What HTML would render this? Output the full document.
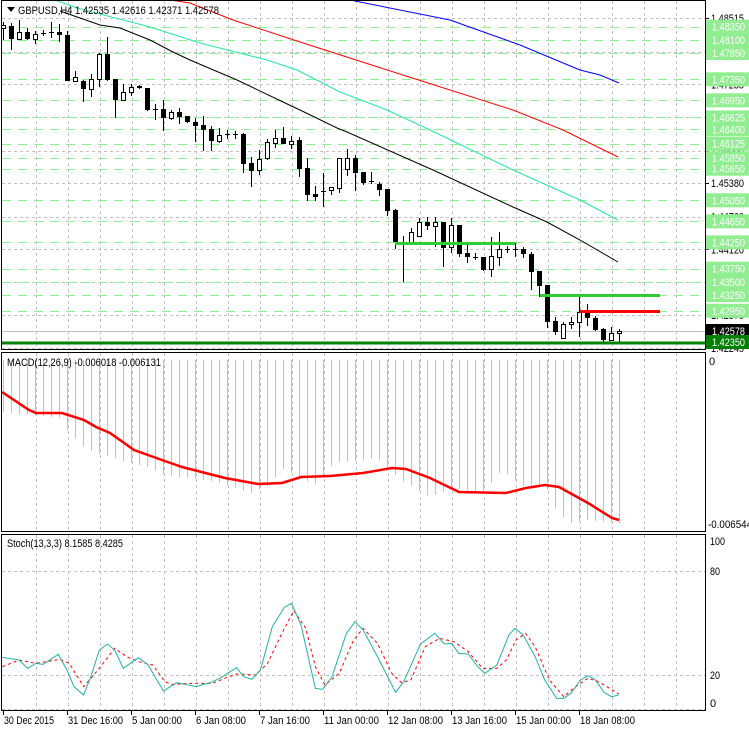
<!DOCTYPE html>
<html><head><meta charset="utf-8">
<style>
html,body{margin:0;padding:0;background:#fff;}
svg{display:block;font-family:"Liberation Sans",sans-serif;}
</style></head>
<body>
<svg id="s" width="749" height="731" viewBox="0 0 749 731" xmlns="http://www.w3.org/2000/svg">
<defs>
<clipPath id="cm"><rect x="2" y="1" width="703" height="348"/></clipPath>
<clipPath id="cs"><rect x="2" y="535" width="703" height="175"/></clipPath>
</defs>
<rect width="749" height="731" fill="#fff"/>
<g id="grid"></g>
<g id="main" clip-path="url(#cm)"></g>
<g id="macd"></g>
<g id="stoch" clip-path="url(#cs)"></g>
<g id="axis" font-size="11"></g>
<g stroke="#000" fill="none" stroke-width="1">
<rect x="1.5" y="0.5" width="704" height="349"/>
<rect x="1.5" y="352.5" width="704" height="179"/>
<rect x="1.5" y="534.5" width="704" height="176"/>
</g>
<g font-size="11" fill="#000">
<path d="M7 7 L15 7 L11 12 Z" fill="#000"/>
<text x="18" y="14" textLength="201" lengthAdjust="spacingAndGlyphs">GBPUSD,H4  1.42535 1.42616 1.42371 1.42578</text>
<text x="7" y="366" textLength="154" lengthAdjust="spacingAndGlyphs">MACD(12,26,9) -0.006018 -0.006131</text>
<text x="7" y="547" textLength="116" lengthAdjust="spacingAndGlyphs">Stoch(13,3,3) 8.1585 8.4285</text>
</g>
</svg>
<script>
var NS="http://www.w3.org/2000/svg";
function el(p,t,a){var e=document.createElementNS(NS,t);for(var k in a)e.setAttribute(k,a[k]);p.appendChild(e);return e;}
var G=document.getElementById('grid'),M=document.getElementById('main'),MC=document.getElementById('macd'),ST=document.getElementById('stoch'),AX=document.getElementById('axis');
function py(p){return 26.7+(1.4835-p)/0.0001901;}
function tx(x,y,s,fill,len){var a={x:x,y:y};if(fill)a.fill=fill;if(len){a.textLength=len;a.lengthAdjust='spacingAndGlyphs';}var t=el(AX,'text',a);t.textContent=s;return t;}
for(var k=1;k<=21;k++){var x=4+32*k+0.5;
 el(G,'line',{x1:x,y1:1,x2:x,y2:349,stroke:'#c0c0c0','stroke-dasharray':'3,3'});
 el(G,'line',{x1:x,y1:353,x2:x,y2:531,stroke:'#c0c0c0','stroke-dasharray':'3,3'});
 el(G,'line',{x1:x,y1:535,x2:x,y2:710,stroke:'#c0c0c0','stroke-dasharray':'3,3'});}
var hg=[[18,'1.48515'],[51.7,'1.47875'],[84.3,'1.47235'],[117,'1.46595'],[150.7,'1.46000'],[183,'1.45380'],[216.7,'1.44760'],[249.3,'1.44120'],[282,'1.43500'],[315,'1.42875'],[348,'1.42245']];
hg.forEach(function(h){var y=Math.round(h[0])+0.5;el(G,'line',{x1:2,y1:y,x2:705,y2:y,stroke:'#c0c0c0','stroke-dasharray':'3,3'});
 el(AX,'line',{x1:705,y1:y,x2:709,y2:y,stroke:'#000'});
 tx(711,h[0]+4,h[1],null,33);});
[571,675,709].forEach(function(y){el(G,'line',{x1:2,y1:y+0.5,x2:705,y2:y+0.5,stroke:'#c0c0c0','stroke-dasharray':'3,3'});});
var gl=['1.48350','1.48100','1.47850','1.47350','1.46950','1.46625','1.46400','1.46125','1.45850','1.45650','1.45050','1.44650','1.44250','1.43750','1.43500','1.43250','1.42950'];
gl.forEach(function(p){var y=Math.round(py(+p))+0.5;el(M,'line',{x1:2,y1:y,x2:705,y2:y,stroke:'#90ee90','stroke-dasharray':'9,7'});});
el(M,'line',{x1:2,y1:331.5,x2:705,y2:331.5,stroke:'#c0c0c0'});
function pl(p,pts,c,w,d){var a={points:pts.map(function(q){return q.join(',')}).join(' '),fill:'none',stroke:c,'stroke-width':w||1};if(d)a['stroke-dasharray']=d;el(p,'polyline',a);}
pl(M,[[350,0],[450,20],[520,45],[580,70],[600,75],[619,83]],'#0000ff');
pl(M,[[170,0],[190,3],[233,20],[300,42],[406,76],[513,110],[563,130],[618,157]],'#ff0000');
pl(M,[[55,0],[77,8],[150,27],[200,43],[267,60],[297,70],[340,92],[387,110],[430,130],[513,170],[580,200],[618,220]],'#20e8a8');
pl(M,[[60,11],[100,25],[120,28],[150,40],[173,52],[190,60],[237,80],[283,102],[300,110],[337,128],[347,132],[433,170],[513,207],[547,222],[580,240],[618,262]],'#000');
var C=[[1,25,28,22,40],[0,26,39,23,50],[1,32,39,20,39],[0,32,39,28,40],[1,34,39,31,44],[0,33,34,30,36],[0,32,33,22,38],[0,32,35,24,42],[0,35,81,31,81],[1,77,81,71,81],[0,81,89,80,102],[1,79,89,74,97],[1,54,79,53,87],[0,54,80,37,81],[0,79,100,79,118],[1,92,100,84,101],[1,87,92,84,96],[0,86,88,85,89],[0,88,110,88,111],[0,109,110,104,120],[0,109,118,100,131],[1,112,118,110,120],[0,112,117,108,124],[0,116,122,116,123],[0,122,126,118,142],[0,125,130,116,151],[0,129,141,126,151],[1,135,141,128,143],[0,134,135,130,139],[0,134,135,131,139],[0,134,164,133,173],[0,163,171,157,187],[1,159,170,150,175],[1,142,158,139,160],[1,138,143,130,148],[0,138,144,127,144],[1,141,144,136,149],[0,140,169,137,177],[0,168,195,158,201],[0,194,197,186,201],[0,191,192,173,207],[1,187,190,187,195],[1,158,188,158,193],[1,158,169,149,176],[0,158,173,155,191],[0,172,183,172,185],[0,181,182,172,184],[0,184,190,182,196],[0,189,211,189,216],[0,210,242,209,249],[0,242,243,236,282],[1,232,244,228,245],[1,222,236,218,236],[0,222,226,217,230],[1,222,226,217,247],[0,222,248,222,267],[1,225,247,218,253],[0,225,254,225,257],[0,253,257,243,263],[0,257,258,253,260],[0,257,270,257,271],[1,256,269,237,277],[1,249,257,232,266],[0,249,250,246,253],[0,249,250,243,257],[0,249,254,247,258],[0,254,272,252,290],[0,271,286,271,297],[0,285,322,285,328],[0,321,332,317,335],[1,324,338,322,339],[1,322,324,317,329],[1,312,322,296,337],[0,312,318,304,326],[0,318,330,316,331],[0,329,340,328,342],[1,333,340,327,341],[1,331,333,329,342]];
C.forEach(function(c,i){var x=3+8*i;
 el(M,'line',{x1:x+0.5,y1:c[3],x2:x+0.5,y2:c[4],stroke:'#000'});
 if(c[0])el(M,'rect',{x:x-1.5,y:c[1]+0.5,width:4,height:Math.max(1,c[2]-c[1]),fill:'#fff',stroke:'#000'});
 else el(M,'rect',{x:x-2,y:c[1],width:5,height:Math.max(1,c[2]-c[1]),fill:'#000'});});
el(M,'line',{x1:395,y1:243.5,x2:515,y2:243.5,stroke:'#32cd32','stroke-width':3});
el(M,'line',{x1:540,y1:295.5,x2:660,y2:295.5,stroke:'#32cd32','stroke-width':3});
el(M,'line',{x1:580,y1:311.5,x2:660,y2:311.5,stroke:'#ff0000','stroke-width':3});
el(M,'line',{x1:2,y1:343,x2:705,y2:343,stroke:'#008000','stroke-width':3});
gl.forEach(function(p){var y=py(+p);el(AX,'rect',{x:706,y:y-7,width:43,height:14,fill:'#90ee90'});tx(712,y+4,p,'#fff',33);});
el(AX,'rect',{x:706,y:324,width:43,height:14,fill:'#000'});tx(712,335,'1.42578','#fff',33);
el(AX,'rect',{x:706,y:335,width:43,height:14,fill:'#008000'});tx(712,346,'1.42350','#fff',33);
function interp(pts,x){for(var i=0;i<pts.length-1;i++){if(x>=pts[i][0]&&x<=pts[i+1][0]){var f=(x-pts[i][0])/(pts[i+1][0]-pts[i][0]);return pts[i][1]+f*(pts[i+1][1]-pts[i][1]);}}return pts[pts.length-1][1];}
var H=[[3,412],[20,414],[36,415],[60,418],[67,430],[84,447],[93,452],[115,458],[124,461],[148,467],[165,475],[205,480],[220,483],[251,493],[270,485],[282,468],[299,477],[315,485],[334,463],[377,458],[401,480],[430,497],[454,488],[483,493],[502,470],[526,488],[545,484],[557,512],[571,523],[588,520],[619,523]];
for(var i=0;i<78;i++){var x=3+8*i+0.5;el(MC,'line',{x1:x,y1:360,x2:x,y2:interp(H,x),stroke:'#c0c0c0'});}
pl(MC,[[2,392],[29,410],[36,413],[62,413],[84,420],[96,427],[110,433],[134,450],[162,460],[182,467],[225,478],[258,484],[282,483],[301,477],[330,476],[363,473],[392,468],[406,469],[430,478],[459,492],[506,493],[526,488],[545,485],[559,487],[588,503],[612,518],[619,520]],'#ff0000',2.5);
tx(709,365,'0');
tx(708,528,'-0.006544',null,44);
function cv(a){return a.map(function(q){return [q[0]/2.093,500+q[1]/3];});}
var SM=[[5,472],[40,480],[58,505],[75,490],[90,493],[122,463],[140,510],[155,560],[175,585],[190,530],[208,450],[225,432],[240,450],[258,505],[290,473],[310,495],[342,573],[370,548],[410,560],[440,548],[460,535],[495,503],[510,530],[527,538],[545,510],[570,380],[595,322],[610,310],[630,375],[660,565],[675,568],[695,530],[725,400],[743,365],[760,390],[790,470],[828,577],[845,545],[880,432],[910,400],[930,432],[945,430],[960,460],[980,462],[1000,500],[1015,520],[1040,495],[1065,405],[1078,385],[1095,405],[1120,470],[1140,540],[1165,595],[1180,595],[1195,580],[1215,540],[1230,527],[1245,538],[1265,578],[1280,590],[1295,585]];
var SS=[[5,500],[40,480],[75,490],[125,478],[145,490],[175,560],[205,510],[240,445],[265,470],[290,485],[320,495],[345,545],[360,553],[405,550],[445,550],[470,535],[495,522],[535,525],[560,490],[590,400],[615,332],[640,385],[660,500],[680,555],[710,520],[740,420],[760,385],[790,430],[820,520],[840,548],[860,540],[890,440],[920,415],[950,425],[980,455],[1010,505],[1040,505],[1060,480],[1080,420],[1100,400],[1120,440],[1150,540],[1180,590],[1200,565],[1230,535],[1250,543],[1270,560],[1295,582]];
pl(ST,cv(SS),'#ff0000',1,'3,3');
pl(ST,cv(SM),'#20b2aa',1);
tx(710,545,'100',null,15);tx(710,575,'80',null,10);tx(710,679,'20',null,10);tx(710,707,'0');
var tl=['30 Dec 2015','31 Dec 16:00','5 Jan 00:00','6 Jan 08:00','7 Jan 16:00','11 Jan 00:00','12 Jan 08:00','13 Jan 16:00','15 Jan 00:00','18 Jan 08:00'];
tl.forEach(function(s,i){var x=3+64*i;el(AX,'line',{x1:x+0.5,y1:711,x2:x+0.5,y2:715,stroke:'#000'});tx(x+1,724,s,null,Math.round(s.length*4.55));});
</script>
</body></html>
